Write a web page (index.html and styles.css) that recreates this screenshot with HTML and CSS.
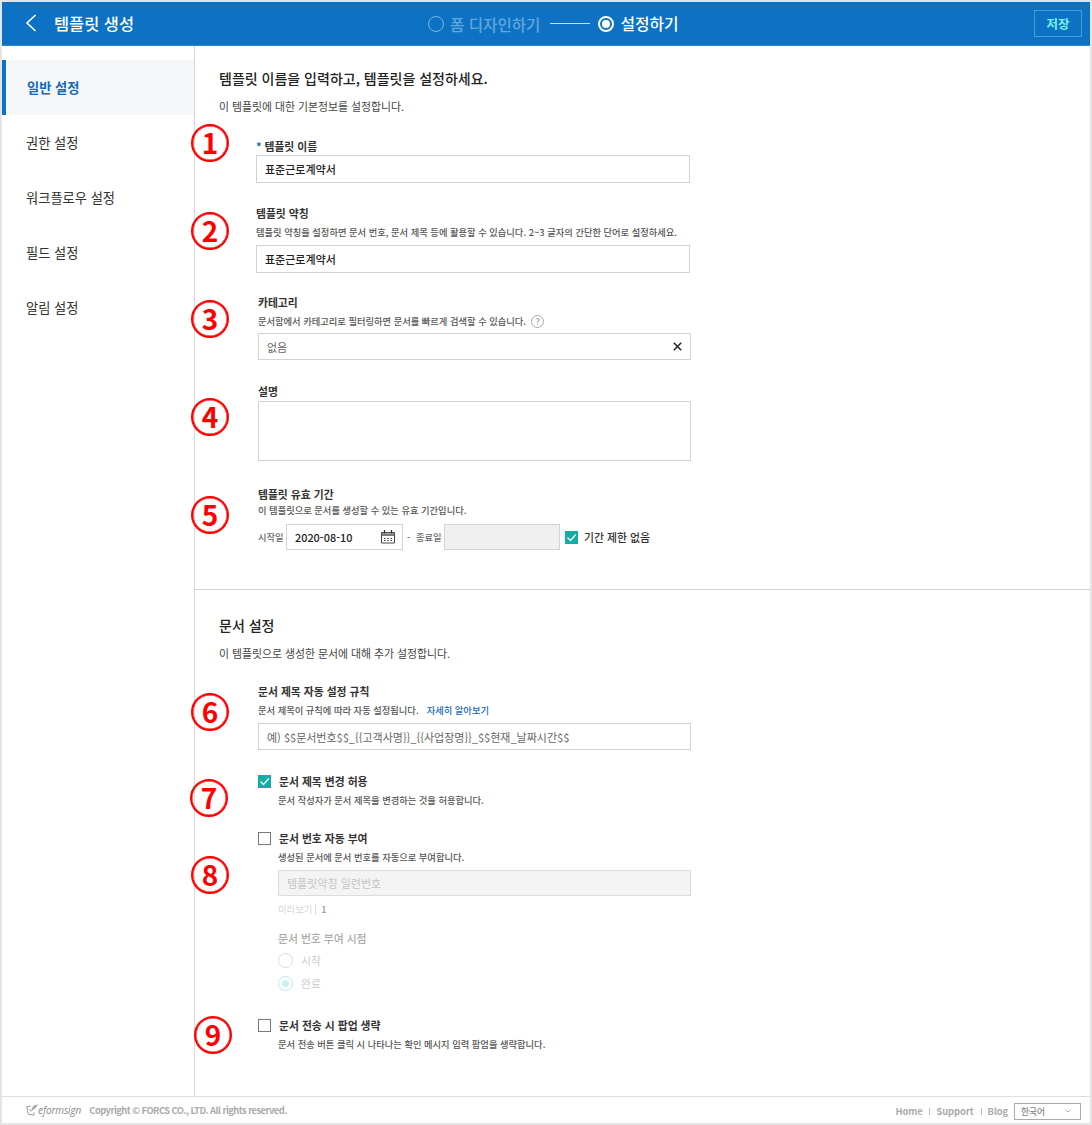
FILE: index.html
```html
<!DOCTYPE html>
<html lang="ko">
<head>
<meta charset="utf-8">
<title>템플릿 생성</title>
<link rel="stylesheet" href="styles.css">
</head>
<body>
<div class="app">
  <header class="topbar">
    <div class="topbar-left">
      <svg class="back" width="12" height="18" viewBox="0 0 12 18"><path d="M10.500 1 2 9l8.500 8" fill="none" stroke="#fff" stroke-width="1.600"/></svg>
      <h1 class="title">템플릿 생성</h1>
    </div>
    <div class="steps">
      <span class="step-dot"></span>
      <span class="step">폼 디자인하기</span>
      <span class="step-line"></span>
      <span class="step-dot step-dot-on"></span>
      <span class="step step-on">설정하기</span>
    </div>
    <button class="save">저장</button>
  </header>

  <div class="body">
    <nav class="sidebar">
      <a class="nav-item active">일반 설정</a>
      <a class="nav-item">권한 설정</a>
      <a class="nav-item">워크플로우 설정</a>
      <a class="nav-item">필드 설정</a>
      <a class="nav-item">알림 설정</a>
    </nav>

    <main class="main">
      <section class="section basic">
        <h2 class="heading">템플릿 이름을 입력하고, 템플릿을 설정하세요.</h2>
        <p class="desc">이 템플릿에 대한 기본정보를 설정합니다.</p>

        <div class="field f-name">
          <span class="marker">1</span>
          <div class="label"><span class="required">*</span>템플릿 이름</div>
          <div class="input">표준근로계약서</div>
        </div>

        <div class="field f-short">
          <span class="marker">2</span>
          <div class="label">템플릿 약칭</div>
          <div class="help">템플릿 약칭을 설정하면 문서 번호, 문서 제목 등에 활용할 수 있습니다. 2~3 글자의 간단한 단어로 설정하세요.</div>
          <div class="input">표준근로계약서</div>
        </div>

        <div class="field f-category">
          <span class="marker">3</span>
          <div class="label">카테고리</div>
          <div class="help">문서함에서 카테고리로 필터링하면 문서를 빠르게 검색할 수 있습니다.<span class="tip">?</span></div>
          <div class="input muted">없음
            <svg width="9" height="9" viewBox="0 0 9 9"><path d="M.8.8l7.400 7.400M8.200.8L.8 8.200" stroke="#222" stroke-width="1.500" fill="none"/></svg>
          </div>
        </div>

        <div class="field f-desc">
          <span class="marker">4</span>
          <div class="label">설명</div>
          <div class="input textarea"></div>
        </div>

        <div class="field f-period">
          <span class="marker">5</span>
          <div class="label">템플릿 유효 기간</div>
          <div class="help">이 템플릿으로 문서를 생성할 수 있는 유효 기간입니다.</div>
          <div class="period">
            <span class="period-label">시작일</span>
            <div class="input date">2020-08-10
              <svg width="16" height="14" viewBox="0 0 16 14"><path d="M1.500 2.500h13v10.500h-13zM1 5h14" stroke="#444" stroke-width="1" fill="none"/><path d="M1 3h14M1 5h14" stroke="#555" stroke-width="1"/><path d="M4.500 0v3.500M11.500 0v3.500" stroke="#333" stroke-width="1.300"/><path d="M4 8.500h8.500M4 10.500h8.500" stroke="#333" stroke-width="1.200" stroke-dasharray="1.500 1.800"/></svg>
            </div>
            <span class="period-label dash">-</span>
            <span class="period-label end">종료일</span>
            <div class="input date disabled"></div>
            <span class="check checked"><svg width="13" height="13" viewBox="0 0 13 13"><path d="M2.500 6.500l3 3 5.300-6" fill="none" stroke="#fff" stroke-width="1.200"/></svg></span>
            <span class="check-text">기간 제한 없음</span>
          </div>
        </div>
      </section>

      <section class="section document">
        <h2 class="heading">문서 설정</h2>
        <p class="desc">이 템플릿으로 생성한 문서에 대해 추가 설정합니다.</p>

        <div class="field f-rule">
          <span class="marker">6</span>
          <div class="label">문서 제목 자동 설정 규칙</div>
          <div class="help">문서 제목이 규칙에 따라 자동 설정됩니다.<a class="link">자세히 알아보기</a></div>
          <div class="input placeholder">예) $$문서번호$$_{{고객사명}}_{{사업장명}}_$$현재_날짜시간$$</div>
        </div>

        <div class="field option f-rename">
          <span class="marker">7</span>
          <div class="label"><span class="check checked"><svg width="13" height="13" viewBox="0 0 13 13"><path d="M2.500 6.500l3 3 5.300-6" fill="none" stroke="#fff" stroke-width="1.200"/></svg></span>문서 제목 변경 허용</div>
          <div class="help">문서 작성자가 문서 제목을 변경하는 것을 허용합니다.</div>
        </div>

        <div class="field option f-number">
          <span class="marker">8</span>
          <div class="label"><span class="check"></span>문서 번호 자동 부여</div>
          <div class="help">생성된 문서에 문서 번호를 자동으로 부여합니다.</div>
          <div class="input number-format">템플릿약칭 일련번호</div>
          <div class="preview">미리보기<span class="preview-value">1</span></div>
          <div class="sub-label">문서 번호 부여 시점</div>
          <div class="radio-row"><span class="radio"></span>시작</div>
          <div class="radio-row"><span class="radio radio-on"></span>완료</div>
        </div>

        <div class="field option f-popup">
          <span class="marker">9</span>
          <div class="label"><span class="check"></span>문서 전송 시 팝업 생략</div>
          <div class="help">문서 전송 버튼 클릭 시 나타나는 확인 메시지 입력 팝업을 생략합니다.</div>
        </div>
      </section>
    </main>
  </div>

  <footer class="footer">
    <svg class="logo-mark" width="12" height="12" viewBox="0 0 12 12"><path d="M4.500 2.200L.8 2.700l1.500 7.500 5.500 1 .4-2.500" fill="none" stroke="#999" stroke-width="1"/><path d="M3.500 4.800l1.700 2.400L11.500.8" fill="none" stroke="#999" stroke-width="1"/><path d="M5.500 5l2-3.200 4.300-1.500-2.300 4-3 1.500z" fill="#aaa"/></svg>
    <span class="logo">eformsign</span>
    <span class="copyright">Copyright © FORCS CO., LTD. All rights reserved.</span>
    <div class="footer-links">
      <a>Home</a><i></i><a>Support</a><i></i><a>Blog</a>
    </div>
    <div class="lang">한국어
      <svg width="6" height="4" viewBox="0 0 6 4"><path d="M.4.7Q3 4.600 5.600.7" fill="none" stroke="#aaa" stroke-width=".9"/></svg>
    </div>
  </footer>
</div>
</body>
</html>
```
FILE: styles.css
```css
* { box-sizing: border-box; }

body {
  margin: 0;
  background: #fff;
  font-family: "Noto Sans CJK KR", "Noto Sans", sans-serif;
  color: #333;
  white-space: nowrap;
}

.app {
  display: flex;
  flex-direction: column;
  height: 1125px;
  border: 2px solid #e4e4e4;
}

/* Top bar */
.topbar {
  display: grid;
  grid-template-columns: 426px 1fr auto;
  align-items: center;
  height: 44px;
  padding-right: 8px;
  background: #0d72c3;
  border-bottom: 1px solid #2b87d3;
  color: #fff;
}
.topbar-left { display: flex; align-items: center; padding-left: 23px; }
.back { margin-top: -1px; }
.title { margin: -1px 0 0 17px; font-size: 16.4px; font-weight: 500; line-height: 24px; }
.steps { display: flex; align-items: center; font-size: 15.6px; font-weight: 500; line-height: 24px; }
.step { margin-left: 6px; color: #62a7df; }
.step-on { color: #fff; font-size: 15.800px; }
.step-line { width: 40px; height: 1px; margin: 0 8px 0 10px; background: #c7def1; }
.step-dot {
  display: grid;
  place-items: center;
  width: 16px;
  height: 16px;
  border: 1px solid #7db8e6;
  border-radius: 50%;
}
.step-dot-on { border: 2px solid #fff; }
.step-dot-on::after { content: ""; width: 8px; height: 8px; border-radius: 50%; background: #fff; }
.save {
  width: 48px;
  height: 27px;
  padding: 0;
  border: 1px solid #3aa5cf;
  background: none;
  color: #77efea;
  font: 700 12.500px/24px "Noto Sans CJK KR", sans-serif;
}

.body { display: flex; flex: 1; min-height: 0; }

/* Sidebar */
.sidebar { width: 193px; padding-top: 14px; border-right: 1px solid #d9d9d9; }
.nav-item {
  display: block;
  height: 55px;
  padding-left: 24px;
  font-size: 13.250px;
  line-height: 55px;
}
.nav-item.active {
  padding-left: 21px;
  border-left: 4px solid #0d72c3;
  background: #f5f7f9;
  box-shadow: inset 1px 0 #fff;
  color: #1468b8;
  font-weight: 700;
}

/* Sections */
.main { flex: 1; }
.section { padding-left: 24px; }
.basic { height: 544px; padding-top: 20px; border-bottom: 1px solid #d4d4d4; }
.document { padding-top: 23px; }
.heading { margin: 0; font-size: 14px; font-weight: 500; line-height: 24px; color: #222; }
.desc { margin: 8px 0 0; font-size: 10.870px; line-height: 16px; color: #444; }

/* Fields */
.field { position: relative; width: 433px; margin-left: 39px; }
.f-name, .f-short { width: 434px; margin-left: 37px; }
.label { display: flex; align-items: center; height: 16px; font-size: 10.800px; font-weight: 700; line-height: 16px; color: #333; }
.required { margin-right: 3px; color: #1468b8; }
.help { display: flex; align-items: center; height: 14px; font-size: 9.280px; font-weight: 500; line-height: 14px; color: #555; }
.tip {
  width: 13px;
  height: 13px;
  margin-left: 5px;
  border: 1px solid #aaa;
  border-radius: 50%;
  color: #999;
  font-size: 9px;
  line-height: 11px;
  text-align: center;
}
.input {
  display: flex;
  align-items: center;
  justify-content: space-between;
  height: 27px;
  padding: 0 8px;
  border: 1px solid #d3d3d3;
  background: #fff;
  font-size: 11px;
  font-weight: 500;
  color: #222;
}
.muted, .placeholder { color: #666; font-weight: 400; }

.f-name { margin-top: 24px; }
.f-name .input { height: 28px; margin-top: 1px; }
.f-short { margin-top: 22px; }
.f-short .help { margin-top: 4px; }
.f-short .input { height: 28px; margin-top: 6px; }
.f-category { margin-top: 21px; }
.f-category .help { margin-top: 4px; }
.f-category .input { margin-top: 5px; }
.f-desc { margin-top: 23px; }
.f-desc .textarea { height: 60px; margin-top: 2px; }
.f-period { margin-top: 25px; }
.f-period .help { margin-top: 1px; }

.period { display: flex; align-items: center; height: 26px; margin-top: 7px; }
.period-label { width: 28px; font-size: 9.280px; font-weight: 500; color: #666; }
.period-label.dash { width: 13px; padding-left: 4px; }
.date { width: 117px; height: 26px; padding-right: 6px; font-size: 10.900px; }
.date.disabled { width: 116px; background: #f0f0f0; }

.check { flex: none; width: 13px; height: 13px; border: 1px solid #777; background: #fff; }
.check svg { display: block; }
.check.checked { border: 0; background: #13ada5; }
.period .check { margin-left: 5px; }
.check-text { margin-left: 6px; font-size: 10.850px; font-weight: 500; color: #333; }

.f-rule { margin-top: 22px; }
.f-rule .help { margin-top: 4px; }
.f-rule .input { margin-top: 6px; }
.link { margin-left: 8px; color: #1468b8; }

/* Checkbox options with indented details */
.option { padding-left: 20px; }
.option .label { margin-left: -20px; }
.option .check { margin-right: 8px; }
.option .help { margin-top: 4px; }
.f-rename { margin-top: 23px; }
.f-number { margin-top: 23px; }
.f-number .help { margin-top: 4px; }
.number-format { height: 26px; margin-top: 6px; border-color: #ddd; background: #f4f4f4; color: #c4c4c4; font-weight: 400; }
.preview { display: flex; align-items: center; height: 14px; margin-top: 6px; font-size: 9.330px; line-height: 14px; color: #d6d6d6; }
.preview-value { height: 11px; margin-left: 3px; padding-left: 5px; border-left: 1px solid #ddd; font-weight: 500; line-height: 11px; color: #999; }
.sub-label { margin-top: 14px; font-size: 10.800px; font-weight: 500; line-height: 16px; color: #aaa; }
.radio-row { display: flex; align-items: center; height: 16px; margin-top: 7px; font-size: 10.850px; color: #ccc; }
.sub-label + .radio-row { margin-top: 6px; }
.radio { display: grid; place-items: center; width: 15px; height: 15px; margin-right: 8px; border: 1px solid #ddd; border-radius: 50%; }
.radio-on { border-color: #bdece8; }
.radio-on::after { content: ""; width: 7px; height: 7px; border-radius: 50%; background: #cbf0ed; }
.f-popup { margin-top: 26px; }

/* Numbered callouts lying over the form */
.marker {
  position: absolute;
  left: -67px;
  width: 38px;
  height: 38px;
  border: 2px solid #f00;
  border-radius: 50%;
  box-shadow: inset 0 0 0 .5px #f00;
  color: #f00;
  font-size: 28px;
  font-weight: 700;
  line-height: 33px;
  text-align: center;
}
.f-name .marker { top: -14px; left: -65px; }
.f-short .marker { top: 7px; left: -65px; }
.f-category .marker { top: 6px; }
.f-desc .marker { top: 15px; }
.f-period .marker { top: 10px; }
.f-rule .marker { top: 10px; }
.f-rename .marker { top: 6px; left: -68px; }
.f-number .marker { top: 26px; }
.f-popup .marker { top: -1px; left: -64px; }

/* Footer */
.footer {
  display: flex;
  align-items: center;
  height: 27px;
  padding: 0 9px 0 24px;
  border-top: 1px solid #dedede;
  color: #aaa;
  font-size: 9.300px;
  font-weight: 700;
}
.logo { font: italic 400 10px/14px "Open Sans", sans-serif; letter-spacing: -.1px; color: #888; }
.copyright { margin-left: 8px; letter-spacing: -.52px; }
.footer-links { display: flex; align-items: center; margin: 2px 0 0 auto; font-size: 9.400px; letter-spacing: -.1px; }
.footer-links i { width: 1px; height: 7px; margin: 0 6px 0 7px; background: #bbb; }
.lang {
  display: flex;
  align-items: center;
  justify-content: space-between;
  width: 67px;
  height: 17px;
  margin: 2px 0 0 6px;
  padding: 0 9px 0 6px;
  border: 1px solid #aaa;
  font-size: 8.700px;
  font-weight: 500;
  color: #888;
}
```
